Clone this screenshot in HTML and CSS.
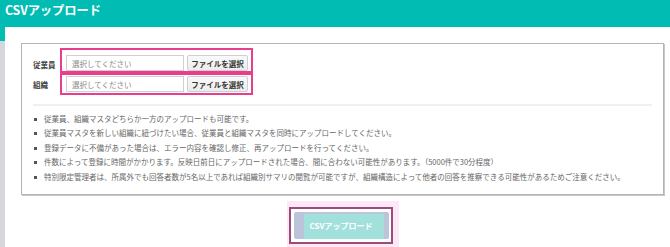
FILE: index.html
```html
<!DOCTYPE html>
<html lang="ja">
<head>
    <meta charset="UTF-8">
    <meta name="viewport" content="width=device-width, initial-scale=1.0">
    <title>CSVアップロード</title>
    <link rel="stylesheet" href="styles.css">
</head>
<body>
    <header class="page-header">
        <h1>CSVアップロード</h1>
    </header>

    <div class="layout">
        <div class="side-strip"></div>

        <main class="content">
            <section class="upload-box">
                <div class="file-rows">
                    <div class="file-row first">
                        <span class="file-label">従業員</span>
                        <div class="file-pick">
                            <input type="text" class="file-name" placeholder="選択してください" readonly>
                            <button type="button" class="file-button">ファイルを選択</button>
                        </div>
                    </div>
                    <div class="file-row">
                        <span class="file-label">組織</span>
                        <div class="file-pick">
                            <input type="text" class="file-name" placeholder="選択してください" readonly>
                            <button type="button" class="file-button">ファイルを選択</button>
                        </div>
                    </div>
                </div>

                <hr class="divider">

                <ul class="notes">
                    <li>従業員、組織マスタどちらか一方のアップロードも可能です。</li>
                    <li>従業員マスタを新しい組織に紐づけたい場合、従業員と組織マスタを同時にアップロードしてください。</li>
                    <li>登録データに不備があった場合は、エラー内容を確認し修正、再アップロードを行ってください。</li>
                    <li>件数によって登録に時間がかかります。反映日前日にアップロードされた場合、間に合わない可能性があります。（5000件で30分程度）</li>
                    <li>特別限定管理者は、所属外でも回答者数が5名以上であれば組織別サマリの閲覧が可能ですが、組織構造によって他者の回答を推察できる可能性があるためご注意ください。</li>
                </ul>
            </section>

            <div class="submit-area">
                <div class="submit-halo">
                    <div class="submit-frame">
                        <button type="button" class="submit-button">CSVアップロード</button>
                    </div>
                </div>
            </div>
        </main>
    </div>
</body>
</html>
```

FILE: styles.css
```css
body {
    margin: 0;
    padding: 0;
    background: #fff;
    font-family: "Noto Sans CJK JP", "Noto Sans", sans-serif;
    color: #444;
    overflow: hidden;
}
.page-header {
    background: #00bcb2;
    height: 27px;
    box-sizing: border-box;
    padding: 3px 5px 0;
}
.page-header h1 {
    margin: 0;
    font-size: 12.3px;
    line-height: 15px;
    font-weight: bold;
    color: #fff;
    letter-spacing: -0.1px;
}
.layout {
    display: flex;
    height: 220px;
}
.side-strip {
    width: 5px;
    flex: none;
    background: linear-gradient(#00bcb2 0, #00bcb2 14px, #d6d7db 14px);
}
.content {
    flex: 1;
    padding: 16px 6px 0 16px;
}
.upload-box {
    border: 1px solid #b4b4b4;
    box-shadow: 1px 1px 0 #c8c8c8;
    padding: 4px 11px 10px;
}
.file-row {
    display: flex;
    align-items: flex-end;
}
.file-label {
    width: 27px;
    font-size: 7.5px;
    font-weight: bold;
    color: #444;
    line-height: 16px;
    padding-bottom: 2px;
}
.file-pick {
    display: flex;
    gap: 3px;
    border: 2px solid #e83e8c;
    padding: 1px 3px 1px 4px;
}
.file-row.first .file-pick {
    padding-top: 5px;
    padding-bottom: 0;
}
.file-row.first .file-label {
    padding-bottom: 0;
}
.file-name {
    width: 118px;
    height: 16px;
    box-sizing: border-box;
    border: 1px solid #d0d0d0;
    padding: 0 5px;
    font-family: inherit;
    font-size: 7.5px;
    color: #666;
    outline: none;
}
.file-name::placeholder {
    color: #8a8a8a;
}
.file-button {
    width: 61px;
    height: 16px;
    box-sizing: border-box;
    border: 1px solid #cfcfcf;
    border-radius: 2px;
    background: linear-gradient(#fafafa, #ececec);
    padding: 0;
    font-family: inherit;
    font-size: 7.5px;
    font-weight: bold;
    color: #333;
}
.divider {
    border: none;
    height: 2px;
    background: #f0f0f0;
    margin: 9px 0 6px;
}
.notes {
    list-style: none;
    margin: 0;
    padding: 0;
    font-size: 7.5px;
    line-height: 14.4px;
    color: #666;
}
.notes li {
    position: relative;
    padding-left: 11px;
    white-space: nowrap;
}
.notes li::before {
    content: "";
    position: absolute;
    left: 1px;
    top: 6px;
    width: 3px;
    height: 3px;
    background: #555;
}
.submit-area {
    display: flex;
    justify-content: center;
    margin-top: 6px;
}
.submit-halo {
    background: #fde8f7;
    padding: 6px 6px 6px 2px;
}
.submit-frame {
    border: 2px solid #9c4b7a;
    background: #fff;
    padding: 3px 2px 3px 3px;
}
.submit-button {
    display: block;
    width: 95px;
    height: 27px;
    border: none;
    border-radius: 2px;
    padding: 0;
    background:
        linear-gradient(#a2e0db, #a2e0db) no-repeat 10px 2px / 80px 25px,
        #bcc4d9;
    font-family: inherit;
    font-size: 8px;
    font-weight: bold;
    color: #fff;
}
```
